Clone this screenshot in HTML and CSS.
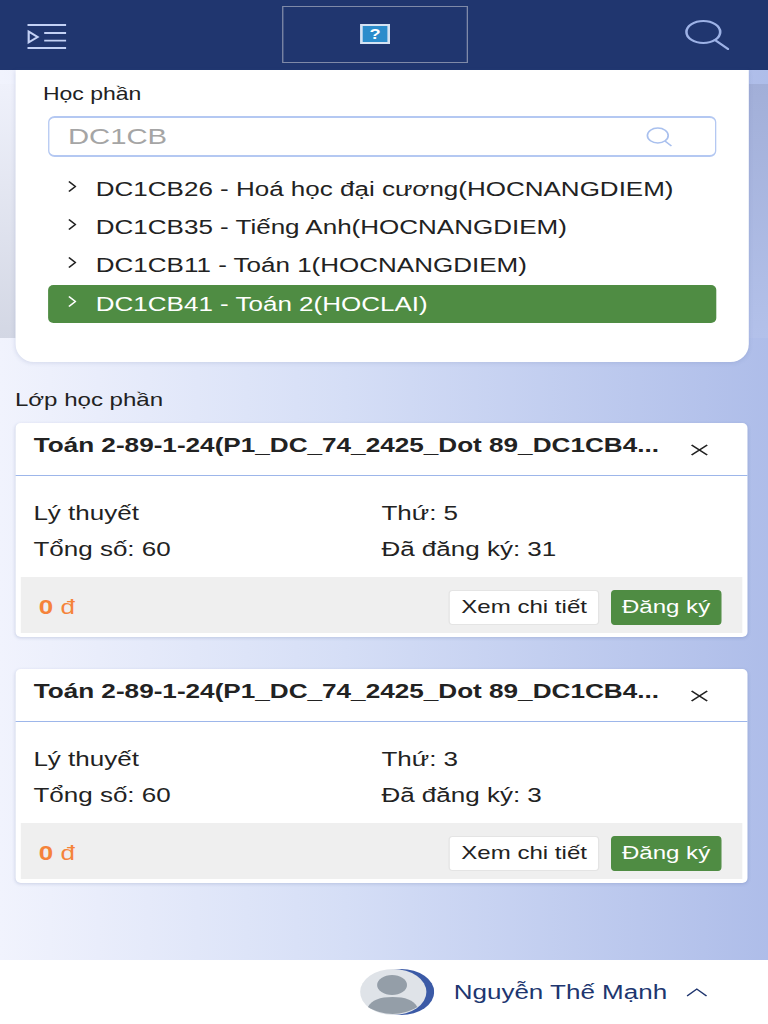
FILE: index.html
```html
<!DOCTYPE html>
<html lang="vi">
<head>
    <meta charset="UTF-8">
    <meta name="viewport" content="width=device-width, initial-scale=1.0">
    <title>Đăng ký học phần</title>
    <link rel="stylesheet" href="styles.css">
</head>
<body>
    <div class="app">
        <header class="topbar">
            <svg class="menu-icon" width="30" height="26" viewBox="0 0 30 26" fill="none" stroke="#c3d1f5" stroke-width="1.800">
                <path d="M0 1h30M13 9h17M13 16.700h17M0 24h30"/>
                <path d="M1 7.500l7 5.500-7 5.500z"/>
            </svg>
            <div class="logo-box">
                <div class="broken-img">?</div>
            </div>
            <svg class="search-icon" width="34" height="30" viewBox="0 0 34 30" fill="none" stroke="#9db2e6" stroke-width="2">
                <ellipse cx="14" cy="12" rx="13" ry="11"/>
                <path d="M23 20l10 9" stroke-linecap="round"/>
            </svg>
        </header>

        <div class="backdrop">
            <section class="filter-card">
                <div class="filter-label">Học phần</div>
                <div class="search-box">
                    <span class="search-text">DC1CB</span>
                    <svg width="20" height="20" viewBox="0 0 20 20" fill="none" stroke="#a9c0ee" stroke-width="1.300">
                        <ellipse cx="9" cy="8.500" rx="8" ry="7.500"/>
                        <path d="M14.500 14l5 5"/>
                    </svg>
                </div>
                <ul class="course-list">
                    <li class="course-item">
                        <svg class="chev" width="7" height="11" viewBox="0 0 7 11" fill="none" stroke="currentColor" stroke-width="1.300"><path d="M1 .500l5 5-5 5"/></svg>
                        DC1CB26 - Hoá học đại cương(HOCNANGDIEM)
                    </li>
                    <li class="course-item">
                        <svg class="chev" width="7" height="11" viewBox="0 0 7 11" fill="none" stroke="currentColor" stroke-width="1.300"><path d="M1 .500l5 5-5 5"/></svg>
                        DC1CB35 - Tiếng Anh(HOCNANGDIEM)
                    </li>
                    <li class="course-item">
                        <svg class="chev" width="7" height="11" viewBox="0 0 7 11" fill="none" stroke="currentColor" stroke-width="1.300"><path d="M1 .500l5 5-5 5"/></svg>
                        DC1CB11 - Toán 1(HOCNANGDIEM)
                    </li>
                    <li class="course-item active">
                        <svg class="chev" width="7" height="11" viewBox="0 0 7 11" fill="none" stroke="currentColor" stroke-width="1.300"><path d="M1 .500l5 5-5 5"/></svg>
                        DC1CB41 - Toán 2(HOCLAI)
                    </li>
                </ul>
            </section>

            <h3 class="section-title">Lớp học phần</h3>

            <article class="class-card">
                <div class="class-head">
                    <div class="class-name">Toán 2-89-1-24(P1_DC_74_2425_Dot 89_DC1CB4...</div>
                    <svg class="close-icon" width="14" height="14" viewBox="0 0 14 14" fill="none" stroke="#222" stroke-width="1.500">
                        <path d="M1 2l12 10M13 2L1 12"/>
                    </svg>
                </div>
                <div class="class-info">
                    <div>Lý thuyết</div>
                    <div>Thứ: 5</div>
                    <div>Tổng số: 60</div>
                    <div>Đã đăng ký: 31</div>
                </div>
                <div class="class-foot">
                    <div class="price"><b>0</b> đ</div>
                    <button class="btn">Xem chi tiết</button>
                    <button class="btn btn-green">Đăng ký</button>
                </div>
            </article>

            <article class="class-card">
                <div class="class-head">
                    <div class="class-name">Toán 2-89-1-24(P1_DC_74_2425_Dot 89_DC1CB4...</div>
                    <svg class="close-icon" width="14" height="14" viewBox="0 0 14 14" fill="none" stroke="#222" stroke-width="1.500">
                        <path d="M1 2l12 10M13 2L1 12"/>
                    </svg>
                </div>
                <div class="class-info">
                    <div>Lý thuyết</div>
                    <div>Thứ: 3</div>
                    <div>Tổng số: 60</div>
                    <div>Đã đăng ký: 3</div>
                </div>
                <div class="class-foot">
                    <div class="price"><b>0</b> đ</div>
                    <button class="btn">Xem chi tiết</button>
                    <button class="btn btn-green">Đăng ký</button>
                </div>
            </article>
        </div>

        <footer class="userbar">
            <svg class="avatar" width="57" height="46" viewBox="0 0 57 46">
                <ellipse cx="31.500" cy="23" rx="25.500" ry="23" fill="#3b5aa6"/>
                <ellipse cx="25.500" cy="23" rx="25.500" ry="23" fill="#dfe3e8"/>
                <ellipse cx="24.600" cy="16" rx="11.500" ry="10" fill="#949ea8"/>
                <path d="M6 38c3-7 9-10 19-10s16 3 19 10c-5 4-12 7-19 7S11 42 6 38z" fill="#949ea8"/>
            </svg>
            <span class="user-name">Nguyễn Thế Mạnh</span>
            <svg width="16" height="10" viewBox="0 0 16 10" fill="none" stroke="#20366f" stroke-width="1.200">
                <path d="M.5 9L8 2l7.500 7"/>
            </svg>
        </footer>
    </div>
</body>
</html>
```
FILE: styles.css
```css
body, html {
    margin: 0;
    padding: 0;
    height: 100%;
    overflow: hidden;
    font-family: "Liberation Sans", Arial, sans-serif;
}

/* the whole screen is stretched sideways in the screenshot */
.app {
    width: calc(768px / 1.3);
    height: 1024px;
    transform: scaleX(1.3);
    transform-origin: 0 0;
    display: flex;
    flex-direction: column;
    overflow: hidden;
    background: linear-gradient(90deg, #f1f3fd 0%, #d5def6 45%, #aebde9 100%);
    color: #222;
}

.topbar {
    height: 70px;
    flex: none;
    background-color: #20366f;
    display: flex;
    align-items: center;
    justify-content: space-between;
    padding: 0 29.5px 0 20.8px;
    box-sizing: border-box;
}

.menu-icon {
    margin-top: 3px;
}

.logo-box {
    width: 143px;
    height: 57px;
    margin: 0 1px 2px 0;
    box-sizing: border-box;
    border: 1px solid #7f8aa8;
    display: flex;
    align-items: center;
    justify-content: center;
}

.broken-img {
    width: 23px;
    height: 20px;
    box-sizing: border-box;
    border: 2px solid #d5e2f2;
    background-color: #2b8ccb;
    color: #fff;
    font-size: 14px;
    font-weight: bold;
    line-height: 16px;
    text-align: center;
}

.backdrop {
    flex: 1;
    padding: 0 14.6px 0 11.5px;
    position: relative;
}

/* darker band of the page behind the filter card */
.backdrop::before,
.backdrop::after {
    content: "";
    position: absolute;
    top: 14px;
    height: 254px;
}

.backdrop::before {
    left: 0;
    width: 12px;
    background: linear-gradient(#eff1fb, #d3d7e4);
}

.backdrop::after {
    right: 0;
    width: 15px;
    background: linear-gradient(#a2afd8, #b3c1ea);
}

.filter-card {
    position: relative;
    z-index: 1;
    background-color: #fff;
    border-radius: 0 0 14px 14px / 0 0 18px 18px;
    height: 292px;
    box-sizing: border-box;
    padding: 13px 25.4px 0 25.3px;
    box-shadow: 0 1px 4px rgba(60, 80, 140, 0.15);
}

.filter-label {
    font-size: 17.7px;
    line-height: 22px;
    margin-left: -3.8px;
}

.search-box {
    height: 41px;
    margin-top: 11px;
    box-sizing: border-box;
    border: solid #b4c8f2;
    border-width: 2px 1.5px;
    border-radius: 5px / 6px;
    display: flex;
    align-items: center;
    justify-content: space-between;
    padding: 0 33px 0 14.5px;
    font-size: 22.5px;
    color: #a5a5a5;
}

.course-list {
    list-style: none;
    margin: 13px 0 0 0;
    padding: 0;
}

.course-item {
    height: 38.33px;
    font-size: 20px;
    border-radius: 4px / 5px;
    padding-left: 15.4px;
    display: flex;
    align-items: center;
}

.course-item.active {
    background-color: #4f8c43;
    color: #fff;
}

.chev {
    flex: none;
    margin: -6px 14.5px 0 0;
}

.section-title {
    position: relative;
    margin: 27px 0 12px 0;
    font-size: 18.5px;
    line-height: 22px;
    font-weight: normal;
}

.class-card {
    position: relative;
    width: 563px;
    height: 214px;
    background-color: #fff;
    border-radius: 4px / 5px;
    box-sizing: border-box;
    margin-bottom: 32px;
    display: flex;
    flex-direction: column;
    box-shadow: 0 1px 3px rgba(60, 80, 140, 0.2);
}

.class-head {
    height: 53px;
    flex: none;
    box-sizing: border-box;
    border-bottom: 1px solid #9db6ea;
    display: flex;
    align-items: center;
    justify-content: space-between;
    padding: 0 30px 7px 14.4px;
}

.class-name {
    font-size: 20.1px;
    font-weight: bold;
    white-space: nowrap;
}

.close-icon {
    margin-top: 8px;
}

.class-info {
    flex: 1;
    display: grid;
    grid-template-columns: 267.7px 1fr;
    grid-auto-rows: 36px;
    align-content: start;
    padding: 18.5px 14.2px 0 14.2px;
    font-size: 20px;
    line-height: 36px;
}

.class-foot {
    height: 56px;
    flex: none;
    box-sizing: border-box;
    margin: 0 3.85px 4px 4.2px;
    background-color: #efefef;
    display: flex;
    align-items: center;
    gap: 9.2px;
    padding: 4px 16px 0 14.2px;
}

.price {
    margin-right: auto;
    color: #f5833a;
    font-size: 20px;
}

.btn {
    width: 115.4px;
    height: 35px;
    box-sizing: border-box;
    padding: 0;
    border: 1px solid #e4e4e4;
    border-radius: 3px / 4px;
    background-color: #fff;
    color: #222;
    font-family: inherit;
    font-size: 18.5px;
}

.btn-green {
    width: 84.6px;
    background-color: #4f8c43;
    border-color: #4f8c43;
    color: #fff;
}

.userbar {
    height: 64px;
    flex: none;
    background-color: #fff;
    display: flex;
    align-items: center;
    padding-left: 277px;
    gap: 15px;
}

.user-name {
    font-size: 20px;
    color: #20366f;
}
```
